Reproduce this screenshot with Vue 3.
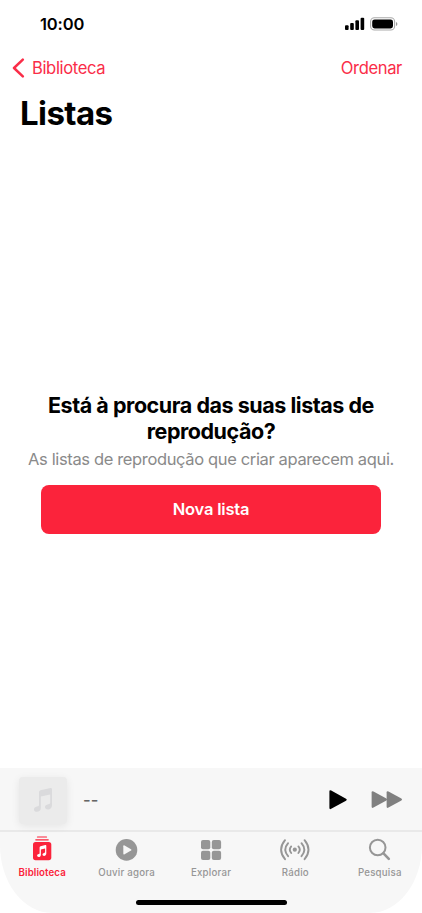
<script setup>
const tabs = [
  { id: 'library', label: 'Biblioteca' },
  { id: 'listen', label: 'Ouvir agora' },
  { id: 'browse', label: 'Explorar' },
  { id: 'radio', label: 'Rádio' },
  { id: 'search', label: 'Pesquisa' },
]
const active = 'library'
</script>

<template>
  <div class="screen">
    <header class="status">
      <span class="time">10:00</span>
      <svg class="status-icons" width="53" height="14" viewBox="0 0 53 14">
        <rect x="0" y="8.3" width="3.6" height="4.7" rx="1" />
        <rect x="5.2" y="6" width="3.6" height="7" rx="1" />
        <rect x="10.4" y="3.3" width="3.6" height="9.7" rx="1" />
        <rect x="15.6" y="0.8" width="3.6" height="12.2" rx="1" />
        <rect x="25.6" y="0.8" width="24" height="12.2" rx="3.8" fill="none" stroke="#aaa" stroke-width="1.1" />
        <rect x="27.2" y="2.4" width="20.8" height="9" rx="2.4" />
        <path d="M51 5v4q1.4-.6 1.4-2T51 5z" fill="#999" />
      </svg>
    </header>
    <nav class="nav">
      <a class="back">
        <svg width="13" height="20" viewBox="0 0 13 20">
          <path d="M10.8 1.6 2 10l8.8 8.4" fill="none" stroke="currentColor" stroke-width="2.5" stroke-linecap="round" stroke-linejoin="round" />
        </svg>
        <span>Biblioteca</span>
      </a>
      <a class="sort">Ordenar</a>
    </nav>
    <h1>Listas</h1>
    <main class="empty">
      <h2>Está à procura das suas listas de<br />reprodução?</h2>
      <p>As listas de reprodução que criar aparecem aqui.</p>
      <button>Nova lista</button>
    </main>
    <footer>
      <div class="player">
        <div class="art">
          <svg width="20" height="26" viewBox="0 0 20 26" fill="#dadadc">
            <path d="M6 5.2Q6 3.7 7.4 3.3L17.5 1.1Q19 .9 19 2.3V18.6C19 21 17.3 22.5 15 22.5C13.2 22.5 12 21.5 12 20.1C12 18.4 13.2 17.6 15.2 17.2L16.3 17Q17.2 16.8 17.2 15.8V7.5L7.8 9.5V21C7.8 23.5 6.1 24.8 3.9 24.8C2.1 24.8 1 23.8 1 22.4C1 20.8 2.1 20 4 19.6L5.1 19.3Q6 19.1 6 18.1Z" />
          </svg>
        </div>
        <span class="track">--</span>
        <svg class="play" width="20" height="22" viewBox="0 0 20 22">
          <path d="M1.4 2.6Q1.4.6 3.2 1.6L18 9.7Q19.8 10.7 18 11.7L3.2 19.8Q1.4 20.8 1.4 18.8Z" />
        </svg>
        <svg class="next" width="32" height="20" viewBox="0 0 32 20" fill="#808080">
          <path d="M.6 2.6Q.6.5 2.5 1.5L15.4 8.6Q16.9 9.5 15.4 10.4L2.5 17.6Q.6 18.6.6 16.6Z" />
          <path d="M15.6 2.6Q15.6.5 17.5 1.5L30.4 8.6Q31.9 9.5 30.4 10.4L17.5 17.6Q15.6 18.6 15.6 16.6Z" />
        </svg>
      </div>
      <div class="tabs">
        <a v-for="tab in tabs" :key="tab.id" class="tab" :class="{ active: tab.id === active }">
          <svg v-if="tab.id === 'library'" width="30" height="26" viewBox="0 0 30 26" fill="currentColor">
            <path d="M10.5 1h9" stroke="currentColor" stroke-width="1.2" stroke-linecap="round" />
            <path d="M8.8 3.8h12.4" stroke="currentColor" stroke-width="1.2" stroke-linecap="round" />
            <rect x="6" y="5.9" width="18.3" height="18.3" rx="2.6" />
            <path transform="translate(.2 -.7)" d="M12.4 12.1Q12.4 11.1 13.3 10.9L18.2 9.8Q19.1 9.6 19.1 10.5V18.3C19.1 19.8 18 20.6 16.9 20.6C15.9 20.6 15.3 20 15.3 19.2C15.3 18.2 16 17.8 17 17.6Q17.9 17.4 17.9 16.8V13.1L13.7 14.1V19.4C13.7 20.9 12.6 21.7 11.5 21.7C10.5 21.7 9.9 21.1 9.9 20.3C9.9 19.3 10.6 18.9 11.6 18.7Q12.4 18.5 12.4 17.9Z" fill="#fff" />
          </svg>
          <svg v-else-if="tab.id === 'listen'" width="30" height="26" viewBox="0 0 30 26">
            <circle cx="14.5" cy="13.9" r="10.8" fill="currentColor" />
            <path d="M11.3 10.3Q11.3 8.9 12.6 9.6L19 13.2Q20.2 13.9 19 14.6L12.6 18.2Q11.3 18.9 11.3 17.5Z" fill="#f7f7f7" />
          </svg>
          <svg v-else-if="tab.id === 'browse'" width="30" height="26" viewBox="0 0 30 26" fill="currentColor">
            <rect x="5" y="4" width="9.3" height="9.2" rx="2" />
            <rect x="15.8" y="4" width="9.3" height="9.2" rx="2" />
            <rect x="5" y="14.7" width="9.3" height="9.2" rx="2" />
            <rect x="15.8" y="14.7" width="9.3" height="9.2" rx="2" />
          </svg>
          <svg v-else-if="tab.id === 'radio'" width="30" height="26" viewBox="0 0 30 26" fill="none" stroke="currentColor" stroke-width="1.9" stroke-linecap="round">
            <circle cx="14.8" cy="13.7" r="2.1" fill="currentColor" stroke="none" />
            <path d="M11.2 10.4Q8.4 13.7 11.2 17M18.4 10.4Q21.2 13.7 18.4 17" />
            <path d="M8.1 7.2Q2.5 13.7 8.1 20.2M21.5 7.2Q27.1 13.7 21.5 20.2" />
            <path d="M5 4.2Q-2.8 13.7 5 23.2M24.6 4.2Q32.4 13.7 24.6 23.2" />
          </svg>
          <svg v-else width="30" height="26" viewBox="0 0 30 26" fill="none" stroke="currentColor" stroke-linecap="round">
            <circle cx="12.7" cy="11.5" r="7.8" stroke-width="2" />
            <path d="M18.5 17.4 23.8 22.8" stroke-width="2.6" />
          </svg>
          <span>{{ tab.label }}</span>
        </a>
      </div>
      <div class="home"></div>
    </footer>
  </div>
</template>

<style>
body {
  background: #fff;
}
</style>

<style scoped>
.screen {
  display: flex;
  flex-direction: column;
  width: 422px;
  height: 913px;
  overflow: hidden;
  background: #fff;
  color: #000;
  font-family: Inter, "Liberation Sans", sans-serif;
}
svg {
  display: block;
  flex: none;
}
.status {
  display: flex;
  justify-content: space-between;
  height: 48px;
  padding: 0 24px 0 40px;
  align-items: center;
  box-sizing: border-box;
}
.time {
  font-size: 16.5px;
  font-weight: 600;
  letter-spacing: -0.15px;
}
.nav {
  display: flex;
  justify-content: space-between;
  align-items: center;
  height: 40px;
  padding: 0 20px 0 12px;
  color: #fa2d48;
  font-size: 16.6px;
  letter-spacing: -0.38px;
}
.back {
  display: flex;
  align-items: center;
  gap: 7px;
}
h1 {
  margin: 4px 0 0 20px;
  font-size: 33px;
  line-height: 43px;
  font-weight: 700;
  letter-spacing: -0.6px;
}
.empty {
  display: flex;
  flex-direction: column;
  align-items: center;
  flex: 1;
  padding-top: 256.5px;
  text-align: center;
}
h2 {
  margin: 0;
  font-size: 21.5px;
  line-height: 26px;
  font-weight: 700;
  letter-spacing: -0.46px;
  white-space: nowrap;
}
p {
  margin: 3.5px 0 0;
  font-size: 16.5px;
  line-height: 24px;
  color: #8a8a8a;
  letter-spacing: -0.36px;
  white-space: nowrap;
}
button {
  width: 340px;
  height: 49px;
  margin-top: 13.5px;
  padding: 0;
  border: 0;
  border-radius: 8px;
  background: #fb233b;
  color: #fff;
  font: 600 16.5px Inter, sans-serif;
  letter-spacing: -0.2px;
}
footer {
  height: 145px;
  background: #f7f7f7;
  border-radius: 0 0 52px 52px / 0 0 68px 68px;
}
.player {
  display: flex;
  align-items: center;
  height: 64px;
  box-sizing: border-box;
  padding: 2px 19px 0;
  border-bottom: 2px solid #e9e9e9;
}
.art {
  display: flex;
  align-items: center;
  justify-content: center;
  width: 48px;
  height: 47px;
  border-radius: 4px;
  background: #ebebeb;
  box-shadow: 0 2px 8px rgba(0, 0, 0, 0.08);
}
.track {
  margin-left: 16px;
  flex: 1;
  font-size: 16.5px;
  font-weight: 500;
  color: #666;
}
.next {
  margin-left: 23px;
}
.tabs {
  display: grid;
  grid-template-columns: repeat(5, 1fr);
  height: 68px;
}
.tab {
  display: flex;
  flex-direction: column;
  align-items: center;
  padding-top: 4px;
  color: #969696;
}
.tab span {
  margin-top: 4px;
  font-size: 9.7px;
  line-height: 14px;
  font-weight: 500;
  letter-spacing: 0.22px;
}
.tab.active {
  color: #fb233b;
}
.tab.active span {
  font-weight: 600;
  letter-spacing: 0.1px;
}
.home {
  width: 151px;
  height: 5px;
  border-radius: 3px;
  margin: 0 auto;
  background: #000;
}
</style>
